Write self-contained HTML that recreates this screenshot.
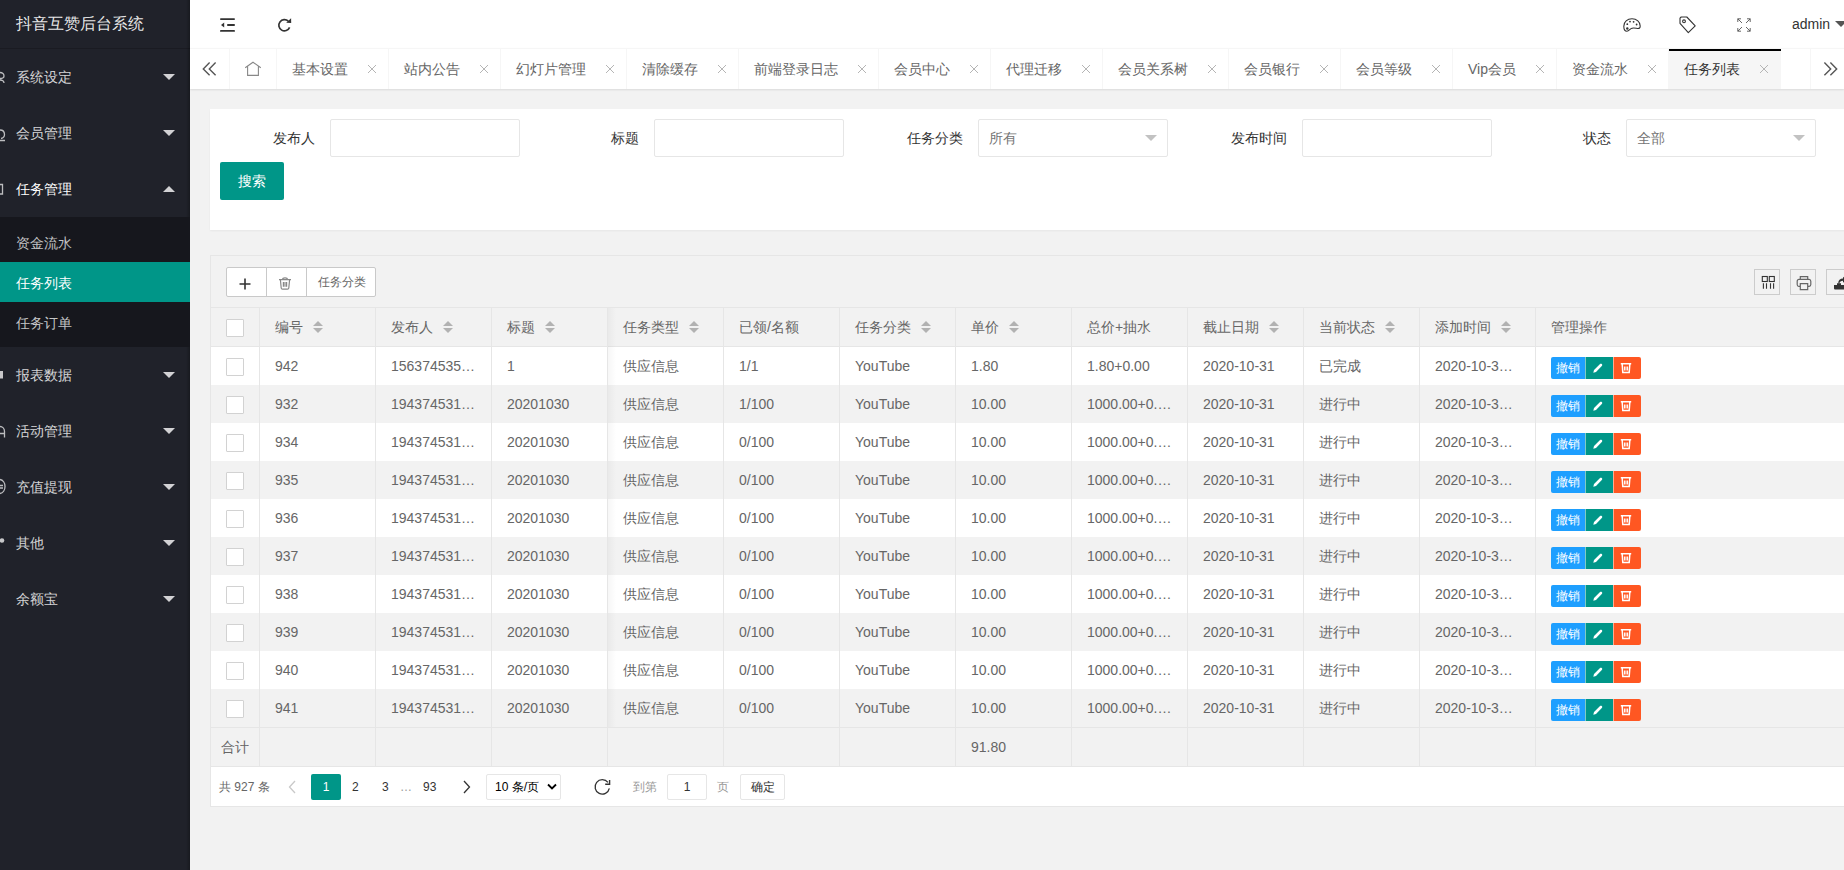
<!DOCTYPE html><html><head><meta charset="utf-8"><style>
*{margin:0;padding:0;box-sizing:border-box}
html,body{width:1844px;height:870px;overflow:hidden;background:#f2f2f2;font-family:"Liberation Sans",sans-serif;font-size:14px;color:#666}
.a{position:absolute}
#side{left:0;top:0;width:190px;height:870px;background:#20222a}
.logo{left:16px;top:14px;font-size:16px;color:rgba(255,255,255,.9);line-height:20px;white-space:nowrap}
.mi{left:16px;font-size:14px;color:rgba(255,255,255,.82);line-height:20px;white-space:nowrap}
.tri{width:0;height:0;border-left:6px solid transparent;border-right:6px solid transparent}
.tri.d{border-top:6px solid rgba(255,255,255,.8)}
.tri.u{border-bottom:6px solid rgba(255,255,255,.8)}
#hdr{left:190px;top:0;width:1654px;height:48px;background:#fff}
#tabs{left:190px;top:48px;width:1654px;height:41px;background:#fff;border-top:1px solid #f6f6f6;box-shadow:0 1px 2px rgba(0,0,0,.1)}
.tab{top:0;height:40px;line-height:40px;border-right:1px solid #f6f6f6;font-size:14px;color:#666;white-space:nowrap}
.tab .x{position:absolute;top:0;font-size:14px;color:#aaa}
.card{background:#fff;box-shadow:0 1px 2px 0 rgba(0,0,0,.05)}
.lbl{font-size:14px;color:#333;line-height:20px;text-align:right;white-space:nowrap}
.inp{height:38px;width:190px;border:1px solid #e6e6e6;background:#fff;border-radius:2px}
.sel{color:#757575;font-size:14px;line-height:36px;padding-left:10px}
.sel i{position:absolute;right:10px;top:15px;width:0;height:0;border-left:6px solid transparent;border-right:6px solid transparent;border-top:6px solid #c2c2c2}
.btn{background:#009688;color:#fff;border-radius:2px;text-align:center}
.cell{height:38px;line-height:38px;padding:0 15px;white-space:nowrap;overflow:hidden;text-overflow:ellipsis;font-size:14px;color:#666}
.vl{width:1px;background:#e6e6e6}
.hl{height:1px;background:#e6e6e6}
.cb{width:18px;height:18px;border:1px solid #d2d2d2;background:#fff;border-radius:1px}
.sort{display:inline-block;position:relative;width:10px;height:20px;vertical-align:middle;margin-left:10px}
.sort:before{content:"";position:absolute;left:0;top:3px;border:5px solid transparent;border-top:0;border-bottom:5px solid #b2b2b2}
.sort:after{content:"";position:absolute;left:0;top:10px;border:5px solid transparent;border-bottom:0;border-top:5px solid #b2b2b2}
.ob{height:22px;line-height:22px;color:#fff;font-size:12px;text-align:center}
.pg{font-size:12px;color:#333;line-height:26px;white-space:nowrap}
</style></head><body>

<div id="side" class="a">
<div class="a logo">抖音互赞后台系统</div>
<div class="a" style="left:0;top:48px;width:190px;height:1px;background:rgba(0,0,0,.18)"></div>
<div class="a" style="left:186px;top:0;width:4px;height:870px;background:linear-gradient(to right,rgba(0,0,0,0),rgba(0,0,0,.25))"></div>
<div class="a" style="left:0;top:217px;width:190px;height:130px;background:#16171d"></div>
<div class="a" style="left:0;top:262px;width:190px;height:40px;background:#009688"></div>
<svg class="a" style="left:0;top:0" width="8" height="870" viewBox="0 0 8 870"><g fill="none" stroke="rgba(255,255,255,.7)" stroke-width="1.3">
<path d="M0 72.5C2.5 72.5 4 74 4 76C4 78 2 78.5 0 78.5M0 80C2.5 80 4 81 4 83"/>
<path d="M0 130C3 130 4.5 132 4.5 134.5C4.5 137 3 138 1 138.5M0 140.5H5"/>
<path d="M0 184.5H2.5V194H0"/>
<path d="M0 426.5C2.5 426.5 4.5 428.5 4.5 431.5V437.5M0 433.5H4.5"/>
<path d="M0 479.5C3 480 5 483 5 486.5C5 490 3 493 0 493.5M0 485.5H3M0 488H3"/>
</g><g fill="rgba(255,255,255,.75)"><rect x="0" y="371" width="3" height="7.5"/><circle cx="2" cy="540.5" r="2.3"/></g></svg>
<div class="a mi" style="top:67px">系统设定</div>
<div class="a tri d" style="left:163px;top:74px"></div>
<div class="a mi" style="top:123px">会员管理</div>
<div class="a tri d" style="left:163px;top:130px"></div>
<div class="a mi" style="top:179px;color:#fff">任务管理</div>
<div class="a tri u" style="left:163px;top:186px"></div>
<div class="a mi" style="top:365px">报表数据</div>
<div class="a tri d" style="left:163px;top:372px"></div>
<div class="a mi" style="top:421px">活动管理</div>
<div class="a tri d" style="left:163px;top:428px"></div>
<div class="a mi" style="top:477px">充值提现</div>
<div class="a tri d" style="left:163px;top:484px"></div>
<div class="a mi" style="top:533px">其他</div>
<div class="a tri d" style="left:163px;top:540px"></div>
<div class="a mi" style="top:589px">余额宝</div>
<div class="a tri d" style="left:163px;top:596px"></div>
<div class="a mi" style="top:233px;color:rgba(255,255,255,.75)">资金流水</div>
<div class="a mi" style="top:273px;color:#fff">任务列表</div>
<div class="a mi" style="top:313px;color:rgba(255,255,255,.75)">任务订单</div>
</div>
<div id="hdr" class="a"></div>
<svg class="a" style="left:220px;top:18px" width="16" height="14" viewBox="0 0 16 14"><g fill="#333"><rect x="0" y="0.2" width="15" height="1.8" rx=".9"/><rect x="7" y="6.1" width="8" height="1.8" rx=".9"/><rect x="0" y="12" width="15" height="1.8" rx=".9"/><path d="M1 7 L4.2 4.6 V9.4Z"/></g></svg>
<svg class="a" style="left:277px;top:18px" width="15" height="15" viewBox="0 0 15 15"><path d="M12.6 9.4 A5.6 5.6 0 1 1 11.3 3.2" fill="none" stroke="#333" stroke-width="1.7"/><path d="M9.2 4.8 L14.2 4.9 L14.1 0.3Z" fill="#333"/></svg>
<div id="tabs" class="a"></div>
<svg class="a" style="left:1623px;top:18px" width="18" height="14" viewBox="0 0 18 14"><path d="M9 0.8C4.3 0.8 0.8 4 0.8 8.2C0.8 11.3 2.2 13.2 4 13.2C5.6 13.2 6.6 11.5 8 10.6C9.8 9.5 12.3 10.2 14.5 10.5C16.4 10.7 17.2 9.8 17.2 8C17.2 4 13.7 0.8 9 0.8Z" fill="none" stroke="#333" stroke-width="1.1"/><circle cx="4.3" cy="10.5" r="1.2" fill="#333"/><circle cx="4.3" cy="6.2" r=".9" fill="#333"/><circle cx="7" cy="3.6" r=".9" fill="#333"/><circle cx="10.6" cy="3.8" r=".9" fill="#333"/><circle cx="13.6" cy="6.5" r=".9" fill="#333"/></svg>
<svg class="a" style="left:1679px;top:16px" width="18" height="18" viewBox="0 0 18 18"><path d="M1 2.2V7.3L9.3 16.6L16.2 9.9L7.8 1H2.2Z" fill="none" stroke="#333" stroke-width="1.1" stroke-linejoin="round"/><circle cx="5" cy="5.3" r="1.4" fill="none" stroke="#333" stroke-width="1.1"/></svg>
<svg class="a" style="left:1737px;top:18px" width="14" height="14" viewBox="0 0 14 14"><g fill="none" stroke="#555" stroke-width=".9"><path d="M0.8 0.8L5 5M13.2 0.8L9 5M0.8 13.2L5 9M13.2 13.2L9 9M0.8 4V0.8H4M10 0.8H13.2V4M0.8 10V13.2H4M10 13.2H13.2V10"/></g></svg>
<div class="a" style="left:1792px;top:14px;font-size:14px;line-height:20px;color:#333">admin</div>
<div class="a" style="left:1835px;top:21px;width:0;height:0;border-left:6px solid transparent;border-right:6px solid transparent;border-top:6px solid #555"></div>
<div class="a tab" style="left:190px;top:49px;width:40px;text-align:center"></div>
<svg class="a" style="left:202px;top:62px" width="15" height="14" viewBox="0 0 15 14"><path d="M7.6 .6 L1.3 6.9 L7.6 13.2 M13.6 .6 L7.3 6.9 L13.6 13.2" fill="none" stroke="#555" stroke-width="1.4"/></svg>
<div class="a" style="left:229px;top:49px;width:1px;height:40px;background:#f6f6f6"></div>
<svg class="a" style="left:244px;top:61px" width="18" height="16" viewBox="0 0 18 16"><path d="M1.2 6.8 L9 1.2 L16.8 6.8 M3.6 5.6 V14.4 H14.4 V5.6" fill="none" stroke="#888" stroke-width="1.1"/></svg>
<div class="a" style="left:276px;top:49px;width:1px;height:40px;background:#f6f6f6"></div>
<div class="a tab" style="left:277px;top:49px;width:112px;"><span style="position:absolute;left:15px">基本设置</span><svg style="position:absolute;left:90px;top:15px" width="10" height="10" viewBox="0 0 10 10"><path d="M1 1L9 9M9 1L1 9" stroke="#b5b5b5" stroke-width="1"/></svg></div>
<div class="a tab" style="left:389px;top:49px;width:112px;"><span style="position:absolute;left:15px">站内公告</span><svg style="position:absolute;left:90px;top:15px" width="10" height="10" viewBox="0 0 10 10"><path d="M1 1L9 9M9 1L1 9" stroke="#b5b5b5" stroke-width="1"/></svg></div>
<div class="a tab" style="left:501px;top:49px;width:126px;"><span style="position:absolute;left:15px">幻灯片管理</span><svg style="position:absolute;left:104px;top:15px" width="10" height="10" viewBox="0 0 10 10"><path d="M1 1L9 9M9 1L1 9" stroke="#b5b5b5" stroke-width="1"/></svg></div>
<div class="a tab" style="left:627px;top:49px;width:112px;"><span style="position:absolute;left:15px">清除缓存</span><svg style="position:absolute;left:90px;top:15px" width="10" height="10" viewBox="0 0 10 10"><path d="M1 1L9 9M9 1L1 9" stroke="#b5b5b5" stroke-width="1"/></svg></div>
<div class="a tab" style="left:739px;top:49px;width:140px;"><span style="position:absolute;left:15px">前端登录日志</span><svg style="position:absolute;left:118px;top:15px" width="10" height="10" viewBox="0 0 10 10"><path d="M1 1L9 9M9 1L1 9" stroke="#b5b5b5" stroke-width="1"/></svg></div>
<div class="a tab" style="left:879px;top:49px;width:112px;"><span style="position:absolute;left:15px">会员中心</span><svg style="position:absolute;left:90px;top:15px" width="10" height="10" viewBox="0 0 10 10"><path d="M1 1L9 9M9 1L1 9" stroke="#b5b5b5" stroke-width="1"/></svg></div>
<div class="a tab" style="left:991px;top:49px;width:112px;"><span style="position:absolute;left:15px">代理迁移</span><svg style="position:absolute;left:90px;top:15px" width="10" height="10" viewBox="0 0 10 10"><path d="M1 1L9 9M9 1L1 9" stroke="#b5b5b5" stroke-width="1"/></svg></div>
<div class="a tab" style="left:1103px;top:49px;width:126px;"><span style="position:absolute;left:15px">会员关系树</span><svg style="position:absolute;left:104px;top:15px" width="10" height="10" viewBox="0 0 10 10"><path d="M1 1L9 9M9 1L1 9" stroke="#b5b5b5" stroke-width="1"/></svg></div>
<div class="a tab" style="left:1229px;top:49px;width:112px;"><span style="position:absolute;left:15px">会员银行</span><svg style="position:absolute;left:90px;top:15px" width="10" height="10" viewBox="0 0 10 10"><path d="M1 1L9 9M9 1L1 9" stroke="#b5b5b5" stroke-width="1"/></svg></div>
<div class="a tab" style="left:1341px;top:49px;width:112px;"><span style="position:absolute;left:15px">会员等级</span><svg style="position:absolute;left:90px;top:15px" width="10" height="10" viewBox="0 0 10 10"><path d="M1 1L9 9M9 1L1 9" stroke="#b5b5b5" stroke-width="1"/></svg></div>
<div class="a tab" style="left:1453px;top:49px;width:104px;"><span style="position:absolute;left:15px">Vip会员</span><svg style="position:absolute;left:82px;top:15px" width="10" height="10" viewBox="0 0 10 10"><path d="M1 1L9 9M9 1L1 9" stroke="#b5b5b5" stroke-width="1"/></svg></div>
<div class="a tab" style="left:1557px;top:49px;width:112px;"><span style="position:absolute;left:15px">资金流水</span><svg style="position:absolute;left:90px;top:15px" width="10" height="10" viewBox="0 0 10 10"><path d="M1 1L9 9M9 1L1 9" stroke="#b5b5b5" stroke-width="1"/></svg></div>
<div class="a tab" style="left:1669px;top:49px;width:112px;background:#f6f6f6;color:#333;"><span style="position:absolute;left:15px">任务列表</span><svg style="position:absolute;left:90px;top:15px" width="10" height="10" viewBox="0 0 10 10"><path d="M1 1L9 9M9 1L1 9" stroke="#b5b5b5" stroke-width="1"/></svg></div>
<div class="a" style="left:1669px;top:49px;width:112px;height:2px;background:#000"></div>
<div class="a" style="left:1810px;top:49px;width:40px;height:40px;background:#fff;border-left:1px solid #f6f6f6"></div>
<svg class="a" style="left:1823px;top:62px" width="15" height="14" viewBox="0 0 15 14"><path d="M1.4 .6 L7.7 6.9 L1.4 13.2 M7.4 .6 L13.7 6.9 L7.4 13.2" fill="none" stroke="#555" stroke-width="1.4"/></svg>
<div class="a card" style="left:210px;top:109px;width:1700px;height:121px"></div>
<div class="a lbl" style="left:215px;top:128px;width:100px">发布人</div>
<div class="a inp" style="left:330px;top:119px"></div>
<div class="a lbl" style="left:539px;top:128px;width:100px">标题</div>
<div class="a inp" style="left:654px;top:119px"></div>
<div class="a lbl" style="left:863px;top:128px;width:100px">任务分类</div>
<div class="a inp sel" style="left:978px;top:119px">所有<i></i></div>
<div class="a lbl" style="left:1187px;top:128px;width:100px">发布时间</div>
<div class="a inp" style="left:1302px;top:119px"></div>
<div class="a lbl" style="left:1511px;top:128px;width:100px">状态</div>
<div class="a inp sel" style="left:1626px;top:119px">全部<i></i></div>
<div class="a btn" style="left:220px;top:162px;width:64px;height:38px;line-height:38px;font-size:14px">搜索</div>
<div class="a" style="left:210px;top:255px;width:1700px;height:552px;border:1px solid #e6e6e6;background:#f2f2f2"></div>
<div class="a" style="left:226px;top:267px;width:150px;height:30px;border:1px solid #c9c9c9;background:#fff;border-radius:2px"></div>
<div class="a" style="left:266px;top:268px;width:1px;height:28px;background:#c9c9c9"></div>
<div class="a" style="left:306px;top:268px;width:1px;height:28px;background:#c9c9c9"></div>
<svg class="a" style="left:238px;top:277px" width="14" height="14" viewBox="0 0 14 14"><path d="M7 1.5V12.5M1.5 7H12.5" stroke="#333" stroke-width="1.6"/></svg>
<svg class="a" style="left:278px;top:277px" width="14" height="13" viewBox="0 0 14 13"><g fill="none" stroke="#888" stroke-width="1.2"><path d="M1 2.6H13M4.6 2.4C4.6 1 5.4 .8 7 .8C8.6 .8 9.4 1 9.4 2.4M2.4 2.8L3.2 11C3.3 11.8 3.8 12.2 4.4 12.2H9.6C10.2 12.2 10.7 11.8 10.8 11L11.6 2.8M5.4 5V9.8M7 5V9.8M8.6 5V9.8"/></g></svg>
<div class="a" style="left:307px;top:267px;width:69px;height:30px;line-height:30px;text-align:center;font-size:12px;color:#666">任务分类</div>
<div class="a" style="left:1754px;top:269px;width:26px;height:26px;border:1px solid #ccc"></div>
<div class="a" style="left:1790px;top:269px;width:26px;height:26px;border:1px solid #ccc"></div>
<div class="a" style="left:1826px;top:269px;width:26px;height:26px;border:1px solid #ccc"></div>
<svg class="a" style="left:1761px;top:275px" width="15" height="15" viewBox="0 0 15 15"><g fill="none" stroke="#333" stroke-width="1.1"><rect x="1.3" y="1.5" width="5" height="5"/><rect x="8.3" y="1.5" width="5" height="5"/><path d="M2.4 8.2V13.8M5.5 8.2V13.8M9.5 8.2V13.8M12.6 8.2V13.8"/></g></svg>
<svg class="a" style="left:1796px;top:275px" width="16" height="16" viewBox="0 0 16 16"><g fill="none" stroke="#666" stroke-width="1.2"><path d="M4.3 4.3V1.6H11.7V4.3"/><path d="M4 11.3H2.8C1.8 11.3 1.2 10.6 1.2 9.6V6.2C1.2 5.1 1.9 4.3 3 4.3H13C14.1 4.3 14.8 5.1 14.8 6.2V9.6C14.8 10.6 14.2 11.3 13.2 11.3H12"/><path d="M4.3 8.6H11.7V14.6H4.3Z"/></g></svg>
<svg class="a" style="left:1833px;top:275px" width="14" height="16" viewBox="0 0 14 16"><g fill="#333"><path d="M1 10H4V8.3H8V10H14V13.2C14 14 13.4 14.6 12.6 14.6H2.4C1.6 14.6 1 14 1 13.2Z"/><path d="M5.2 8.6C5.2 5.4 7.2 3.6 10 3.6V1.8L13.6 4.8L10 7.8V5.8C8 5.8 6.6 6.8 6.4 8.6Z"/></g></svg>
<div class="a hl" style="left:211px;top:307px;width:1633px"></div>
<div class="a" style="left:211px;top:308px;width:1633px;height:38px;background:#f2f2f2"></div>
<div class="a hl" style="left:211px;top:346px;width:1633px"></div>
<div class="a cell" style="left:260px;top:308px;width:115px">编号<i class="sort"></i></div>
<div class="a cell" style="left:376px;top:308px;width:115px">发布人<i class="sort"></i></div>
<div class="a cell" style="left:492px;top:308px;width:115px">标题<i class="sort"></i></div>
<div class="a cell" style="left:608px;top:308px;width:115px">任务类型<i class="sort"></i></div>
<div class="a cell" style="left:724px;top:308px;width:115px">已领/名额</div>
<div class="a cell" style="left:840px;top:308px;width:115px">任务分类<i class="sort"></i></div>
<div class="a cell" style="left:956px;top:308px;width:115px">单价<i class="sort"></i></div>
<div class="a cell" style="left:1072px;top:308px;width:115px">总价+抽水</div>
<div class="a cell" style="left:1188px;top:308px;width:115px">截止日期<i class="sort"></i></div>
<div class="a cell" style="left:1304px;top:308px;width:115px">当前状态<i class="sort"></i></div>
<div class="a cell" style="left:1420px;top:308px;width:115px">添加时间<i class="sort"></i></div>
<div class="a cell" style="left:1536px;top:308px;width:115px">管理操作</div>
<div class="a cb" style="left:226px;top:319px"></div>
<div class="a" style="left:211px;top:347px;width:1633px;height:38px;background:#fff"></div>
<div class="a hl" style="left:211px;top:385px;width:1633px"></div>
<div class="a cb" style="left:226px;top:358px"></div>
<div class="a cell" style="left:260px;top:347px;width:115px">942</div>
<div class="a cell" style="left:376px;top:347px;width:115px">15637453512</div>
<div class="a cell" style="left:492px;top:347px;width:115px">1</div>
<div class="a cell" style="left:608px;top:347px;width:115px">供应信息</div>
<div class="a cell" style="left:724px;top:347px;width:115px">1/1</div>
<div class="a cell" style="left:840px;top:347px;width:115px">YouTube</div>
<div class="a cell" style="left:956px;top:347px;width:115px">1.80</div>
<div class="a cell" style="left:1072px;top:347px;width:115px">1.80+0.00</div>
<div class="a cell" style="left:1188px;top:347px;width:115px">2020-10-31</div>
<div class="a cell" style="left:1304px;top:347px;width:115px">已完成</div>
<div class="a cell" style="left:1420px;top:347px;width:115px">2020-10-31 12:00</div>
<div class="a ob" style="left:1551px;top:357px;width:34px;background:#1e9fff;border-radius:2px 0 0 2px">撤销</div>
<div class="a ob" style="left:1585px;top:357px;width:28px;background:#009688;border-left:1px solid rgba(255,255,255,.5)"></div>
<div class="a ob" style="left:1613px;top:357px;width:28px;background:#ff5722;border-left:1px solid rgba(255,255,255,.5);border-radius:0 2px 2px 0"></div>
<svg class="a" style="left:1592px;top:362px" width="12" height="12" viewBox="0 0 12 12"><path d="M1.3 10.7L2 8L7.8 2.2C8.4 1.6 9.3 1.6 9.8 2.1C10.4 2.7 10.4 3.5 9.8 4.1L4 9.9Z" fill="#fff"/></svg>
<svg class="a" style="left:1620px;top:362px" width="12" height="12" viewBox="0 0 12 12"><g fill="none" stroke="#fff" stroke-width="1.5"><path d="M.8 1.8H11.2M2.2 2.2L2.8 10.4H9.2L9.8 2.2M4.8 4.4V8.6M7.2 4.4V8.6"/></g></svg>
<div class="a" style="left:211px;top:385px;width:1633px;height:38px;background:#f2f2f2"></div>
<div class="a hl" style="left:211px;top:423px;width:1633px"></div>
<div class="a cb" style="left:226px;top:396px"></div>
<div class="a cell" style="left:260px;top:385px;width:115px">932</div>
<div class="a cell" style="left:376px;top:385px;width:115px">19437453121</div>
<div class="a cell" style="left:492px;top:385px;width:115px">20201030</div>
<div class="a cell" style="left:608px;top:385px;width:115px">供应信息</div>
<div class="a cell" style="left:724px;top:385px;width:115px">1/100</div>
<div class="a cell" style="left:840px;top:385px;width:115px">YouTube</div>
<div class="a cell" style="left:956px;top:385px;width:115px">10.00</div>
<div class="a cell" style="left:1072px;top:385px;width:115px">1000.00+0.00</div>
<div class="a cell" style="left:1188px;top:385px;width:115px">2020-10-31</div>
<div class="a cell" style="left:1304px;top:385px;width:115px">进行中</div>
<div class="a cell" style="left:1420px;top:385px;width:115px">2020-10-31 12:00</div>
<div class="a ob" style="left:1551px;top:395px;width:34px;background:#1e9fff;border-radius:2px 0 0 2px">撤销</div>
<div class="a ob" style="left:1585px;top:395px;width:28px;background:#009688;border-left:1px solid rgba(255,255,255,.5)"></div>
<div class="a ob" style="left:1613px;top:395px;width:28px;background:#ff5722;border-left:1px solid rgba(255,255,255,.5);border-radius:0 2px 2px 0"></div>
<svg class="a" style="left:1592px;top:400px" width="12" height="12" viewBox="0 0 12 12"><path d="M1.3 10.7L2 8L7.8 2.2C8.4 1.6 9.3 1.6 9.8 2.1C10.4 2.7 10.4 3.5 9.8 4.1L4 9.9Z" fill="#fff"/></svg>
<svg class="a" style="left:1620px;top:400px" width="12" height="12" viewBox="0 0 12 12"><g fill="none" stroke="#fff" stroke-width="1.5"><path d="M.8 1.8H11.2M2.2 2.2L2.8 10.4H9.2L9.8 2.2M4.8 4.4V8.6M7.2 4.4V8.6"/></g></svg>
<div class="a" style="left:211px;top:423px;width:1633px;height:38px;background:#fff"></div>
<div class="a hl" style="left:211px;top:461px;width:1633px"></div>
<div class="a cb" style="left:226px;top:434px"></div>
<div class="a cell" style="left:260px;top:423px;width:115px">934</div>
<div class="a cell" style="left:376px;top:423px;width:115px">19437453121</div>
<div class="a cell" style="left:492px;top:423px;width:115px">20201030</div>
<div class="a cell" style="left:608px;top:423px;width:115px">供应信息</div>
<div class="a cell" style="left:724px;top:423px;width:115px">0/100</div>
<div class="a cell" style="left:840px;top:423px;width:115px">YouTube</div>
<div class="a cell" style="left:956px;top:423px;width:115px">10.00</div>
<div class="a cell" style="left:1072px;top:423px;width:115px">1000.00+0.00</div>
<div class="a cell" style="left:1188px;top:423px;width:115px">2020-10-31</div>
<div class="a cell" style="left:1304px;top:423px;width:115px">进行中</div>
<div class="a cell" style="left:1420px;top:423px;width:115px">2020-10-31 12:00</div>
<div class="a ob" style="left:1551px;top:433px;width:34px;background:#1e9fff;border-radius:2px 0 0 2px">撤销</div>
<div class="a ob" style="left:1585px;top:433px;width:28px;background:#009688;border-left:1px solid rgba(255,255,255,.5)"></div>
<div class="a ob" style="left:1613px;top:433px;width:28px;background:#ff5722;border-left:1px solid rgba(255,255,255,.5);border-radius:0 2px 2px 0"></div>
<svg class="a" style="left:1592px;top:438px" width="12" height="12" viewBox="0 0 12 12"><path d="M1.3 10.7L2 8L7.8 2.2C8.4 1.6 9.3 1.6 9.8 2.1C10.4 2.7 10.4 3.5 9.8 4.1L4 9.9Z" fill="#fff"/></svg>
<svg class="a" style="left:1620px;top:438px" width="12" height="12" viewBox="0 0 12 12"><g fill="none" stroke="#fff" stroke-width="1.5"><path d="M.8 1.8H11.2M2.2 2.2L2.8 10.4H9.2L9.8 2.2M4.8 4.4V8.6M7.2 4.4V8.6"/></g></svg>
<div class="a" style="left:211px;top:461px;width:1633px;height:38px;background:#f2f2f2"></div>
<div class="a hl" style="left:211px;top:499px;width:1633px"></div>
<div class="a cb" style="left:226px;top:472px"></div>
<div class="a cell" style="left:260px;top:461px;width:115px">935</div>
<div class="a cell" style="left:376px;top:461px;width:115px">19437453121</div>
<div class="a cell" style="left:492px;top:461px;width:115px">20201030</div>
<div class="a cell" style="left:608px;top:461px;width:115px">供应信息</div>
<div class="a cell" style="left:724px;top:461px;width:115px">0/100</div>
<div class="a cell" style="left:840px;top:461px;width:115px">YouTube</div>
<div class="a cell" style="left:956px;top:461px;width:115px">10.00</div>
<div class="a cell" style="left:1072px;top:461px;width:115px">1000.00+0.00</div>
<div class="a cell" style="left:1188px;top:461px;width:115px">2020-10-31</div>
<div class="a cell" style="left:1304px;top:461px;width:115px">进行中</div>
<div class="a cell" style="left:1420px;top:461px;width:115px">2020-10-31 12:00</div>
<div class="a ob" style="left:1551px;top:471px;width:34px;background:#1e9fff;border-radius:2px 0 0 2px">撤销</div>
<div class="a ob" style="left:1585px;top:471px;width:28px;background:#009688;border-left:1px solid rgba(255,255,255,.5)"></div>
<div class="a ob" style="left:1613px;top:471px;width:28px;background:#ff5722;border-left:1px solid rgba(255,255,255,.5);border-radius:0 2px 2px 0"></div>
<svg class="a" style="left:1592px;top:476px" width="12" height="12" viewBox="0 0 12 12"><path d="M1.3 10.7L2 8L7.8 2.2C8.4 1.6 9.3 1.6 9.8 2.1C10.4 2.7 10.4 3.5 9.8 4.1L4 9.9Z" fill="#fff"/></svg>
<svg class="a" style="left:1620px;top:476px" width="12" height="12" viewBox="0 0 12 12"><g fill="none" stroke="#fff" stroke-width="1.5"><path d="M.8 1.8H11.2M2.2 2.2L2.8 10.4H9.2L9.8 2.2M4.8 4.4V8.6M7.2 4.4V8.6"/></g></svg>
<div class="a" style="left:211px;top:499px;width:1633px;height:38px;background:#fff"></div>
<div class="a hl" style="left:211px;top:537px;width:1633px"></div>
<div class="a cb" style="left:226px;top:510px"></div>
<div class="a cell" style="left:260px;top:499px;width:115px">936</div>
<div class="a cell" style="left:376px;top:499px;width:115px">19437453121</div>
<div class="a cell" style="left:492px;top:499px;width:115px">20201030</div>
<div class="a cell" style="left:608px;top:499px;width:115px">供应信息</div>
<div class="a cell" style="left:724px;top:499px;width:115px">0/100</div>
<div class="a cell" style="left:840px;top:499px;width:115px">YouTube</div>
<div class="a cell" style="left:956px;top:499px;width:115px">10.00</div>
<div class="a cell" style="left:1072px;top:499px;width:115px">1000.00+0.00</div>
<div class="a cell" style="left:1188px;top:499px;width:115px">2020-10-31</div>
<div class="a cell" style="left:1304px;top:499px;width:115px">进行中</div>
<div class="a cell" style="left:1420px;top:499px;width:115px">2020-10-31 12:00</div>
<div class="a ob" style="left:1551px;top:509px;width:34px;background:#1e9fff;border-radius:2px 0 0 2px">撤销</div>
<div class="a ob" style="left:1585px;top:509px;width:28px;background:#009688;border-left:1px solid rgba(255,255,255,.5)"></div>
<div class="a ob" style="left:1613px;top:509px;width:28px;background:#ff5722;border-left:1px solid rgba(255,255,255,.5);border-radius:0 2px 2px 0"></div>
<svg class="a" style="left:1592px;top:514px" width="12" height="12" viewBox="0 0 12 12"><path d="M1.3 10.7L2 8L7.8 2.2C8.4 1.6 9.3 1.6 9.8 2.1C10.4 2.7 10.4 3.5 9.8 4.1L4 9.9Z" fill="#fff"/></svg>
<svg class="a" style="left:1620px;top:514px" width="12" height="12" viewBox="0 0 12 12"><g fill="none" stroke="#fff" stroke-width="1.5"><path d="M.8 1.8H11.2M2.2 2.2L2.8 10.4H9.2L9.8 2.2M4.8 4.4V8.6M7.2 4.4V8.6"/></g></svg>
<div class="a" style="left:211px;top:537px;width:1633px;height:38px;background:#f2f2f2"></div>
<div class="a hl" style="left:211px;top:575px;width:1633px"></div>
<div class="a cb" style="left:226px;top:548px"></div>
<div class="a cell" style="left:260px;top:537px;width:115px">937</div>
<div class="a cell" style="left:376px;top:537px;width:115px">19437453121</div>
<div class="a cell" style="left:492px;top:537px;width:115px">20201030</div>
<div class="a cell" style="left:608px;top:537px;width:115px">供应信息</div>
<div class="a cell" style="left:724px;top:537px;width:115px">0/100</div>
<div class="a cell" style="left:840px;top:537px;width:115px">YouTube</div>
<div class="a cell" style="left:956px;top:537px;width:115px">10.00</div>
<div class="a cell" style="left:1072px;top:537px;width:115px">1000.00+0.00</div>
<div class="a cell" style="left:1188px;top:537px;width:115px">2020-10-31</div>
<div class="a cell" style="left:1304px;top:537px;width:115px">进行中</div>
<div class="a cell" style="left:1420px;top:537px;width:115px">2020-10-31 12:00</div>
<div class="a ob" style="left:1551px;top:547px;width:34px;background:#1e9fff;border-radius:2px 0 0 2px">撤销</div>
<div class="a ob" style="left:1585px;top:547px;width:28px;background:#009688;border-left:1px solid rgba(255,255,255,.5)"></div>
<div class="a ob" style="left:1613px;top:547px;width:28px;background:#ff5722;border-left:1px solid rgba(255,255,255,.5);border-radius:0 2px 2px 0"></div>
<svg class="a" style="left:1592px;top:552px" width="12" height="12" viewBox="0 0 12 12"><path d="M1.3 10.7L2 8L7.8 2.2C8.4 1.6 9.3 1.6 9.8 2.1C10.4 2.7 10.4 3.5 9.8 4.1L4 9.9Z" fill="#fff"/></svg>
<svg class="a" style="left:1620px;top:552px" width="12" height="12" viewBox="0 0 12 12"><g fill="none" stroke="#fff" stroke-width="1.5"><path d="M.8 1.8H11.2M2.2 2.2L2.8 10.4H9.2L9.8 2.2M4.8 4.4V8.6M7.2 4.4V8.6"/></g></svg>
<div class="a" style="left:211px;top:575px;width:1633px;height:38px;background:#fff"></div>
<div class="a hl" style="left:211px;top:613px;width:1633px"></div>
<div class="a cb" style="left:226px;top:586px"></div>
<div class="a cell" style="left:260px;top:575px;width:115px">938</div>
<div class="a cell" style="left:376px;top:575px;width:115px">19437453121</div>
<div class="a cell" style="left:492px;top:575px;width:115px">20201030</div>
<div class="a cell" style="left:608px;top:575px;width:115px">供应信息</div>
<div class="a cell" style="left:724px;top:575px;width:115px">0/100</div>
<div class="a cell" style="left:840px;top:575px;width:115px">YouTube</div>
<div class="a cell" style="left:956px;top:575px;width:115px">10.00</div>
<div class="a cell" style="left:1072px;top:575px;width:115px">1000.00+0.00</div>
<div class="a cell" style="left:1188px;top:575px;width:115px">2020-10-31</div>
<div class="a cell" style="left:1304px;top:575px;width:115px">进行中</div>
<div class="a cell" style="left:1420px;top:575px;width:115px">2020-10-31 12:00</div>
<div class="a ob" style="left:1551px;top:585px;width:34px;background:#1e9fff;border-radius:2px 0 0 2px">撤销</div>
<div class="a ob" style="left:1585px;top:585px;width:28px;background:#009688;border-left:1px solid rgba(255,255,255,.5)"></div>
<div class="a ob" style="left:1613px;top:585px;width:28px;background:#ff5722;border-left:1px solid rgba(255,255,255,.5);border-radius:0 2px 2px 0"></div>
<svg class="a" style="left:1592px;top:590px" width="12" height="12" viewBox="0 0 12 12"><path d="M1.3 10.7L2 8L7.8 2.2C8.4 1.6 9.3 1.6 9.8 2.1C10.4 2.7 10.4 3.5 9.8 4.1L4 9.9Z" fill="#fff"/></svg>
<svg class="a" style="left:1620px;top:590px" width="12" height="12" viewBox="0 0 12 12"><g fill="none" stroke="#fff" stroke-width="1.5"><path d="M.8 1.8H11.2M2.2 2.2L2.8 10.4H9.2L9.8 2.2M4.8 4.4V8.6M7.2 4.4V8.6"/></g></svg>
<div class="a" style="left:211px;top:613px;width:1633px;height:38px;background:#f2f2f2"></div>
<div class="a hl" style="left:211px;top:651px;width:1633px"></div>
<div class="a cb" style="left:226px;top:624px"></div>
<div class="a cell" style="left:260px;top:613px;width:115px">939</div>
<div class="a cell" style="left:376px;top:613px;width:115px">19437453121</div>
<div class="a cell" style="left:492px;top:613px;width:115px">20201030</div>
<div class="a cell" style="left:608px;top:613px;width:115px">供应信息</div>
<div class="a cell" style="left:724px;top:613px;width:115px">0/100</div>
<div class="a cell" style="left:840px;top:613px;width:115px">YouTube</div>
<div class="a cell" style="left:956px;top:613px;width:115px">10.00</div>
<div class="a cell" style="left:1072px;top:613px;width:115px">1000.00+0.00</div>
<div class="a cell" style="left:1188px;top:613px;width:115px">2020-10-31</div>
<div class="a cell" style="left:1304px;top:613px;width:115px">进行中</div>
<div class="a cell" style="left:1420px;top:613px;width:115px">2020-10-31 12:00</div>
<div class="a ob" style="left:1551px;top:623px;width:34px;background:#1e9fff;border-radius:2px 0 0 2px">撤销</div>
<div class="a ob" style="left:1585px;top:623px;width:28px;background:#009688;border-left:1px solid rgba(255,255,255,.5)"></div>
<div class="a ob" style="left:1613px;top:623px;width:28px;background:#ff5722;border-left:1px solid rgba(255,255,255,.5);border-radius:0 2px 2px 0"></div>
<svg class="a" style="left:1592px;top:628px" width="12" height="12" viewBox="0 0 12 12"><path d="M1.3 10.7L2 8L7.8 2.2C8.4 1.6 9.3 1.6 9.8 2.1C10.4 2.7 10.4 3.5 9.8 4.1L4 9.9Z" fill="#fff"/></svg>
<svg class="a" style="left:1620px;top:628px" width="12" height="12" viewBox="0 0 12 12"><g fill="none" stroke="#fff" stroke-width="1.5"><path d="M.8 1.8H11.2M2.2 2.2L2.8 10.4H9.2L9.8 2.2M4.8 4.4V8.6M7.2 4.4V8.6"/></g></svg>
<div class="a" style="left:211px;top:651px;width:1633px;height:38px;background:#fff"></div>
<div class="a hl" style="left:211px;top:689px;width:1633px"></div>
<div class="a cb" style="left:226px;top:662px"></div>
<div class="a cell" style="left:260px;top:651px;width:115px">940</div>
<div class="a cell" style="left:376px;top:651px;width:115px">19437453121</div>
<div class="a cell" style="left:492px;top:651px;width:115px">20201030</div>
<div class="a cell" style="left:608px;top:651px;width:115px">供应信息</div>
<div class="a cell" style="left:724px;top:651px;width:115px">0/100</div>
<div class="a cell" style="left:840px;top:651px;width:115px">YouTube</div>
<div class="a cell" style="left:956px;top:651px;width:115px">10.00</div>
<div class="a cell" style="left:1072px;top:651px;width:115px">1000.00+0.00</div>
<div class="a cell" style="left:1188px;top:651px;width:115px">2020-10-31</div>
<div class="a cell" style="left:1304px;top:651px;width:115px">进行中</div>
<div class="a cell" style="left:1420px;top:651px;width:115px">2020-10-31 12:00</div>
<div class="a ob" style="left:1551px;top:661px;width:34px;background:#1e9fff;border-radius:2px 0 0 2px">撤销</div>
<div class="a ob" style="left:1585px;top:661px;width:28px;background:#009688;border-left:1px solid rgba(255,255,255,.5)"></div>
<div class="a ob" style="left:1613px;top:661px;width:28px;background:#ff5722;border-left:1px solid rgba(255,255,255,.5);border-radius:0 2px 2px 0"></div>
<svg class="a" style="left:1592px;top:666px" width="12" height="12" viewBox="0 0 12 12"><path d="M1.3 10.7L2 8L7.8 2.2C8.4 1.6 9.3 1.6 9.8 2.1C10.4 2.7 10.4 3.5 9.8 4.1L4 9.9Z" fill="#fff"/></svg>
<svg class="a" style="left:1620px;top:666px" width="12" height="12" viewBox="0 0 12 12"><g fill="none" stroke="#fff" stroke-width="1.5"><path d="M.8 1.8H11.2M2.2 2.2L2.8 10.4H9.2L9.8 2.2M4.8 4.4V8.6M7.2 4.4V8.6"/></g></svg>
<div class="a" style="left:211px;top:689px;width:1633px;height:38px;background:#f2f2f2"></div>
<div class="a hl" style="left:211px;top:727px;width:1633px"></div>
<div class="a cb" style="left:226px;top:700px"></div>
<div class="a cell" style="left:260px;top:689px;width:115px">941</div>
<div class="a cell" style="left:376px;top:689px;width:115px">19437453121</div>
<div class="a cell" style="left:492px;top:689px;width:115px">20201030</div>
<div class="a cell" style="left:608px;top:689px;width:115px">供应信息</div>
<div class="a cell" style="left:724px;top:689px;width:115px">0/100</div>
<div class="a cell" style="left:840px;top:689px;width:115px">YouTube</div>
<div class="a cell" style="left:956px;top:689px;width:115px">10.00</div>
<div class="a cell" style="left:1072px;top:689px;width:115px">1000.00+0.00</div>
<div class="a cell" style="left:1188px;top:689px;width:115px">2020-10-31</div>
<div class="a cell" style="left:1304px;top:689px;width:115px">进行中</div>
<div class="a cell" style="left:1420px;top:689px;width:115px">2020-10-31 12:00</div>
<div class="a ob" style="left:1551px;top:699px;width:34px;background:#1e9fff;border-radius:2px 0 0 2px">撤销</div>
<div class="a ob" style="left:1585px;top:699px;width:28px;background:#009688;border-left:1px solid rgba(255,255,255,.5)"></div>
<div class="a ob" style="left:1613px;top:699px;width:28px;background:#ff5722;border-left:1px solid rgba(255,255,255,.5);border-radius:0 2px 2px 0"></div>
<svg class="a" style="left:1592px;top:704px" width="12" height="12" viewBox="0 0 12 12"><path d="M1.3 10.7L2 8L7.8 2.2C8.4 1.6 9.3 1.6 9.8 2.1C10.4 2.7 10.4 3.5 9.8 4.1L4 9.9Z" fill="#fff"/></svg>
<svg class="a" style="left:1620px;top:704px" width="12" height="12" viewBox="0 0 12 12"><g fill="none" stroke="#fff" stroke-width="1.5"><path d="M.8 1.8H11.2M2.2 2.2L2.8 10.4H9.2L9.8 2.2M4.8 4.4V8.6M7.2 4.4V8.6"/></g></svg>
<div class="a" style="left:211px;top:728px;width:1633px;height:38px;background:#f2f2f2"></div>
<div class="a hl" style="left:211px;top:766px;width:1633px"></div>
<div class="a cell" style="left:211px;top:728px;width:48px;padding:0 10px">合计</div>
<div class="a cell" style="left:956px;top:728px;width:115px">91.80</div>
<div class="a" style="left:608px;top:308px;width:8px;height:419px;background:linear-gradient(to right,rgba(0,0,0,.035),rgba(0,0,0,0))"></div>
<div class="a vl" style="left:259px;top:308px;height:458px"></div>
<div class="a vl" style="left:375px;top:308px;height:458px"></div>
<div class="a vl" style="left:491px;top:308px;height:458px"></div>
<div class="a vl" style="left:607px;top:308px;height:458px"></div>
<div class="a vl" style="left:723px;top:308px;height:458px"></div>
<div class="a vl" style="left:839px;top:308px;height:458px"></div>
<div class="a vl" style="left:955px;top:308px;height:458px"></div>
<div class="a vl" style="left:1071px;top:308px;height:458px"></div>
<div class="a vl" style="left:1187px;top:308px;height:458px"></div>
<div class="a vl" style="left:1303px;top:308px;height:458px"></div>
<div class="a vl" style="left:1419px;top:308px;height:458px"></div>
<div class="a vl" style="left:1535px;top:308px;height:458px"></div>
<div class="a" style="left:211px;top:767px;width:1633px;height:39px;background:#fff"></div>
<div class="a pg" style="left:219px;top:774px;color:#666">共 927 条</div>
<svg class="a" style="left:288px;top:780px" width="8" height="14" viewBox="0 0 8 14"><path d="M7 1L1.5 7L7 13" fill="none" stroke="#c9c9c9" stroke-width="1.3"/></svg>
<div class="a" style="left:311px;top:774px;width:30px;height:26px;background:#009688;border-radius:2px;color:#fff;text-align:center;line-height:26px;font-size:12px">1</div>
<div class="a pg" style="left:352px;top:774px">2</div>
<div class="a pg" style="left:382px;top:774px">3</div>
<div class="a pg" style="left:400px;top:774px;color:#999">…</div>
<div class="a pg" style="left:423px;top:774px">93</div>
<svg class="a" style="left:463px;top:780px" width="8" height="14" viewBox="0 0 8 14"><path d="M1 1L6.5 7L1 13" fill="none" stroke="#333" stroke-width="1.3"/></svg>
<div class="a" style="left:486px;top:774px;width:75px;height:26px;border:1px solid #e6e6e6;border-radius:2px"></div>
<div class="a pg" style="left:495px;top:774px;color:#000">10 条/页</div>
<svg class="a" style="left:547px;top:783px" width="10" height="8" viewBox="0 0 10 8"><path d="M1 1.5L5 5.5L9 1.5" fill="none" stroke="#000" stroke-width="1.8"/></svg>
<svg class="a" style="left:593px;top:778px" width="18" height="18" viewBox="0 0 18 18"><path d="M16.34 10.40A7.2 7.2 0 1 1 14.97 4.47" fill="none" stroke="#333" stroke-width="1.3"/><path d="M12.2 6.3H16.6V2.1" fill="none" stroke="#333" stroke-width="1.4"/></svg>
<div class="a pg" style="left:633px;top:774px;color:#999">到第</div>
<div class="a" style="left:667px;top:774px;width:40px;height:26px;border:1px solid #e6e6e6;border-radius:2px;text-align:center;line-height:24px;font-size:12px;color:#333">1</div>
<div class="a pg" style="left:717px;top:774px;color:#999">页</div>
<div class="a" style="left:740px;top:774px;width:45px;height:26px;border:1px solid #e6e6e6;border-radius:2px;text-align:center;line-height:24px;font-size:12px;color:#333">确定</div>
</body></html>
